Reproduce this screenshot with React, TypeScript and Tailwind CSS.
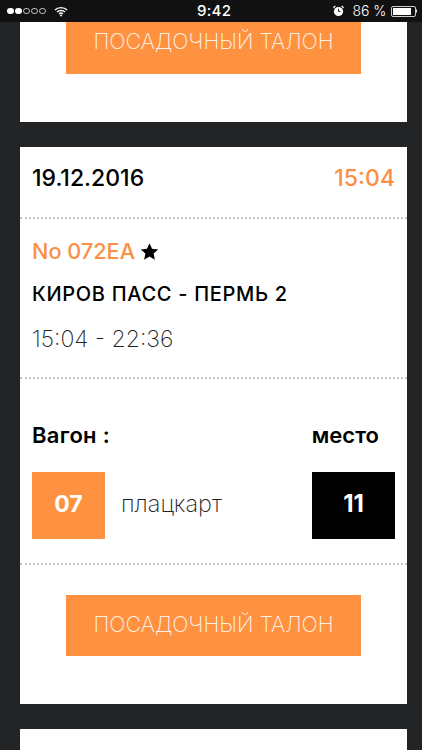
const orange = "bg-[#fe9240]";

function Divider() {
  return <div className="h-0.5 w-full shrink-0 border-t-2 border-dotted border-[#c4c4c4]" />;
}

function BoardingButton({ className }: { className: string }) {
  return (
    <div className={`mx-auto flex w-[295px] justify-center ${orange} text-[21.5px] font-extralight text-[#fff3e6] ${className}`}>
      ПОСАДОЧНЫЙ ТАЛОН
    </div>
  );
}

function StatusBar() {
  return (
    <div className="relative flex h-[22px] shrink-0 items-center justify-between bg-[#111112] pl-[7px] pr-[5px] text-white">
      <div className="flex items-center gap-[8px]">
        <div className="flex gap-[1.5px]">
          <span className="size-[6.5px] rounded-full bg-white" />
          <span className="size-[6.5px] rounded-full bg-white" />
          <span className="size-[6.5px] rounded-full border border-white/70" />
          <span className="size-[6.5px] rounded-full border border-white/70" />
          <span className="size-[6.5px] rounded-full border border-white/70" />
        </div>
        <svg width="14" height="11" viewBox="0 0 15 11" fill="none" stroke="white" strokeWidth="1.5">
          <path d="M1 4 C4.5 0.5 10.5 0.5 14 4" />
          <path d="M3.2 6 C5.5 3.8 9.5 3.8 11.8 6" />
          <path d="M5.4 8 C6.5 7 8.5 7 9.6 8" />
          <path d="M7.5 11 L6 9.3 C7 8.7 8 8.7 9 9.3 Z" fill="white" stroke="none" />
        </svg>
      </div>
      <span className="absolute left-[197px] top-[1px] text-[15px] font-medium leading-[20px] tracking-[0.3px]">9:42</span>
      <div className="flex items-center">
        <svg width="11" height="12" viewBox="0 0 12 12">
          <circle cx="6" cy="6.5" r="5" fill="white" />
          <path d="M6 3.5 V6.5 H8.2" fill="none" stroke="#111112" strokeWidth="1" />
          <path d="M0.5 2.5 L2.5 0.5 M11.5 2.5 L9.5 0.5" stroke="white" strokeWidth="1.4" />
        </svg>
        <span className="ml-[8px] text-[14px] font-light leading-[20px]">86 %</span>
        <div className="ml-[4px] flex items-center">
          <div className="h-[11px] w-[25px] rounded-[2px] border border-white/80 p-px">
            <div className="h-full w-[86%] bg-white" />
          </div>
          <div className="h-[4px] w-[1.5px] rounded-r-full bg-white/80" />
        </div>
      </div>
    </div>
  );
}

export default function App() {
  return (
    <div className="flex h-[750px] w-[422px] flex-col overflow-hidden bg-[#232426] font-['Inter','Noto_Sans',sans-serif]">
      <StatusBar />
      <div className="mx-5 h-[100px] w-[387px] shrink-0 bg-white">
        <BoardingButton className="h-[52px] items-center pb-[14px]" />
      </div>

      <div className="mx-5 mt-[25px] flex w-[387px] shrink-0 flex-col bg-white">
        <div className="flex h-[70px] items-center justify-between pb-[8px] pl-[12px] pr-[12px] text-[23px] font-medium">
          <span className="text-black">19.12.2016</span>
          <span className="text-[#fb8f45]">15:04</span>
        </div>
        <Divider />
        <div className="flex h-[158px] flex-col pl-[12px]">
          <div className="mt-[18px] flex items-center gap-[5px]">
            <span className="text-[21.7px] font-medium leading-[28px] text-[#fb8f45]">No 072EA</span>
            <svg width="19" height="19" viewBox="0 0 24 24" fill="black">
              <path d="M12 1.5 15.2 8.6 23 9.4 17.2 14.6 18.8 22.3 12 18.4 5.2 22.3 6.8 14.6 1 9.4 8.8 8.6Z" />
            </svg>
          </div>
          <div className="mt-[16px] text-[20px] font-medium leading-[26px] tracking-[0.7px] text-black">КИРОВ ПАСС - ПЕРМЬ 2</div>
          <div className="mt-[17px] text-[23px] font-extralight leading-[30px] text-[#222]">15:04 - 22:36</div>
        </div>
        <Divider />
        <div className="flex h-[184px] flex-col px-[12px]">
          <div className="mt-[42px] flex justify-between pr-[16px]">
            <span className="text-[22px] font-semibold leading-[28px] tracking-[0.3px] text-black">Вагон :</span>
            <span className="text-[22px] font-semibold leading-[28px] text-black">место</span>
          </div>
          <div className="mt-[23px] flex items-center">
            <div className={`flex h-[67px] w-[73px] items-center justify-center pb-[3px] ${orange} text-[23px] font-bold text-white`}>07</div>
            <span className="ml-[16px] flex-1 pb-[3px] text-[23.5px] font-extralight text-[#222]">плацкарт</span>
            <div className="flex h-[67px] w-[83px] items-center justify-center bg-black pb-[3px] text-[24px] font-bold text-white">11</div>
          </div>
        </div>
        <Divider />
        <div className="flex h-[139px] flex-col pt-[30px]">
          <BoardingButton className="h-[61px] items-center pb-[3px]" />
        </div>
      </div>

      <div className="mx-5 mt-[25px] w-[387px] flex-1 bg-white" />
    </div>
  );
}
